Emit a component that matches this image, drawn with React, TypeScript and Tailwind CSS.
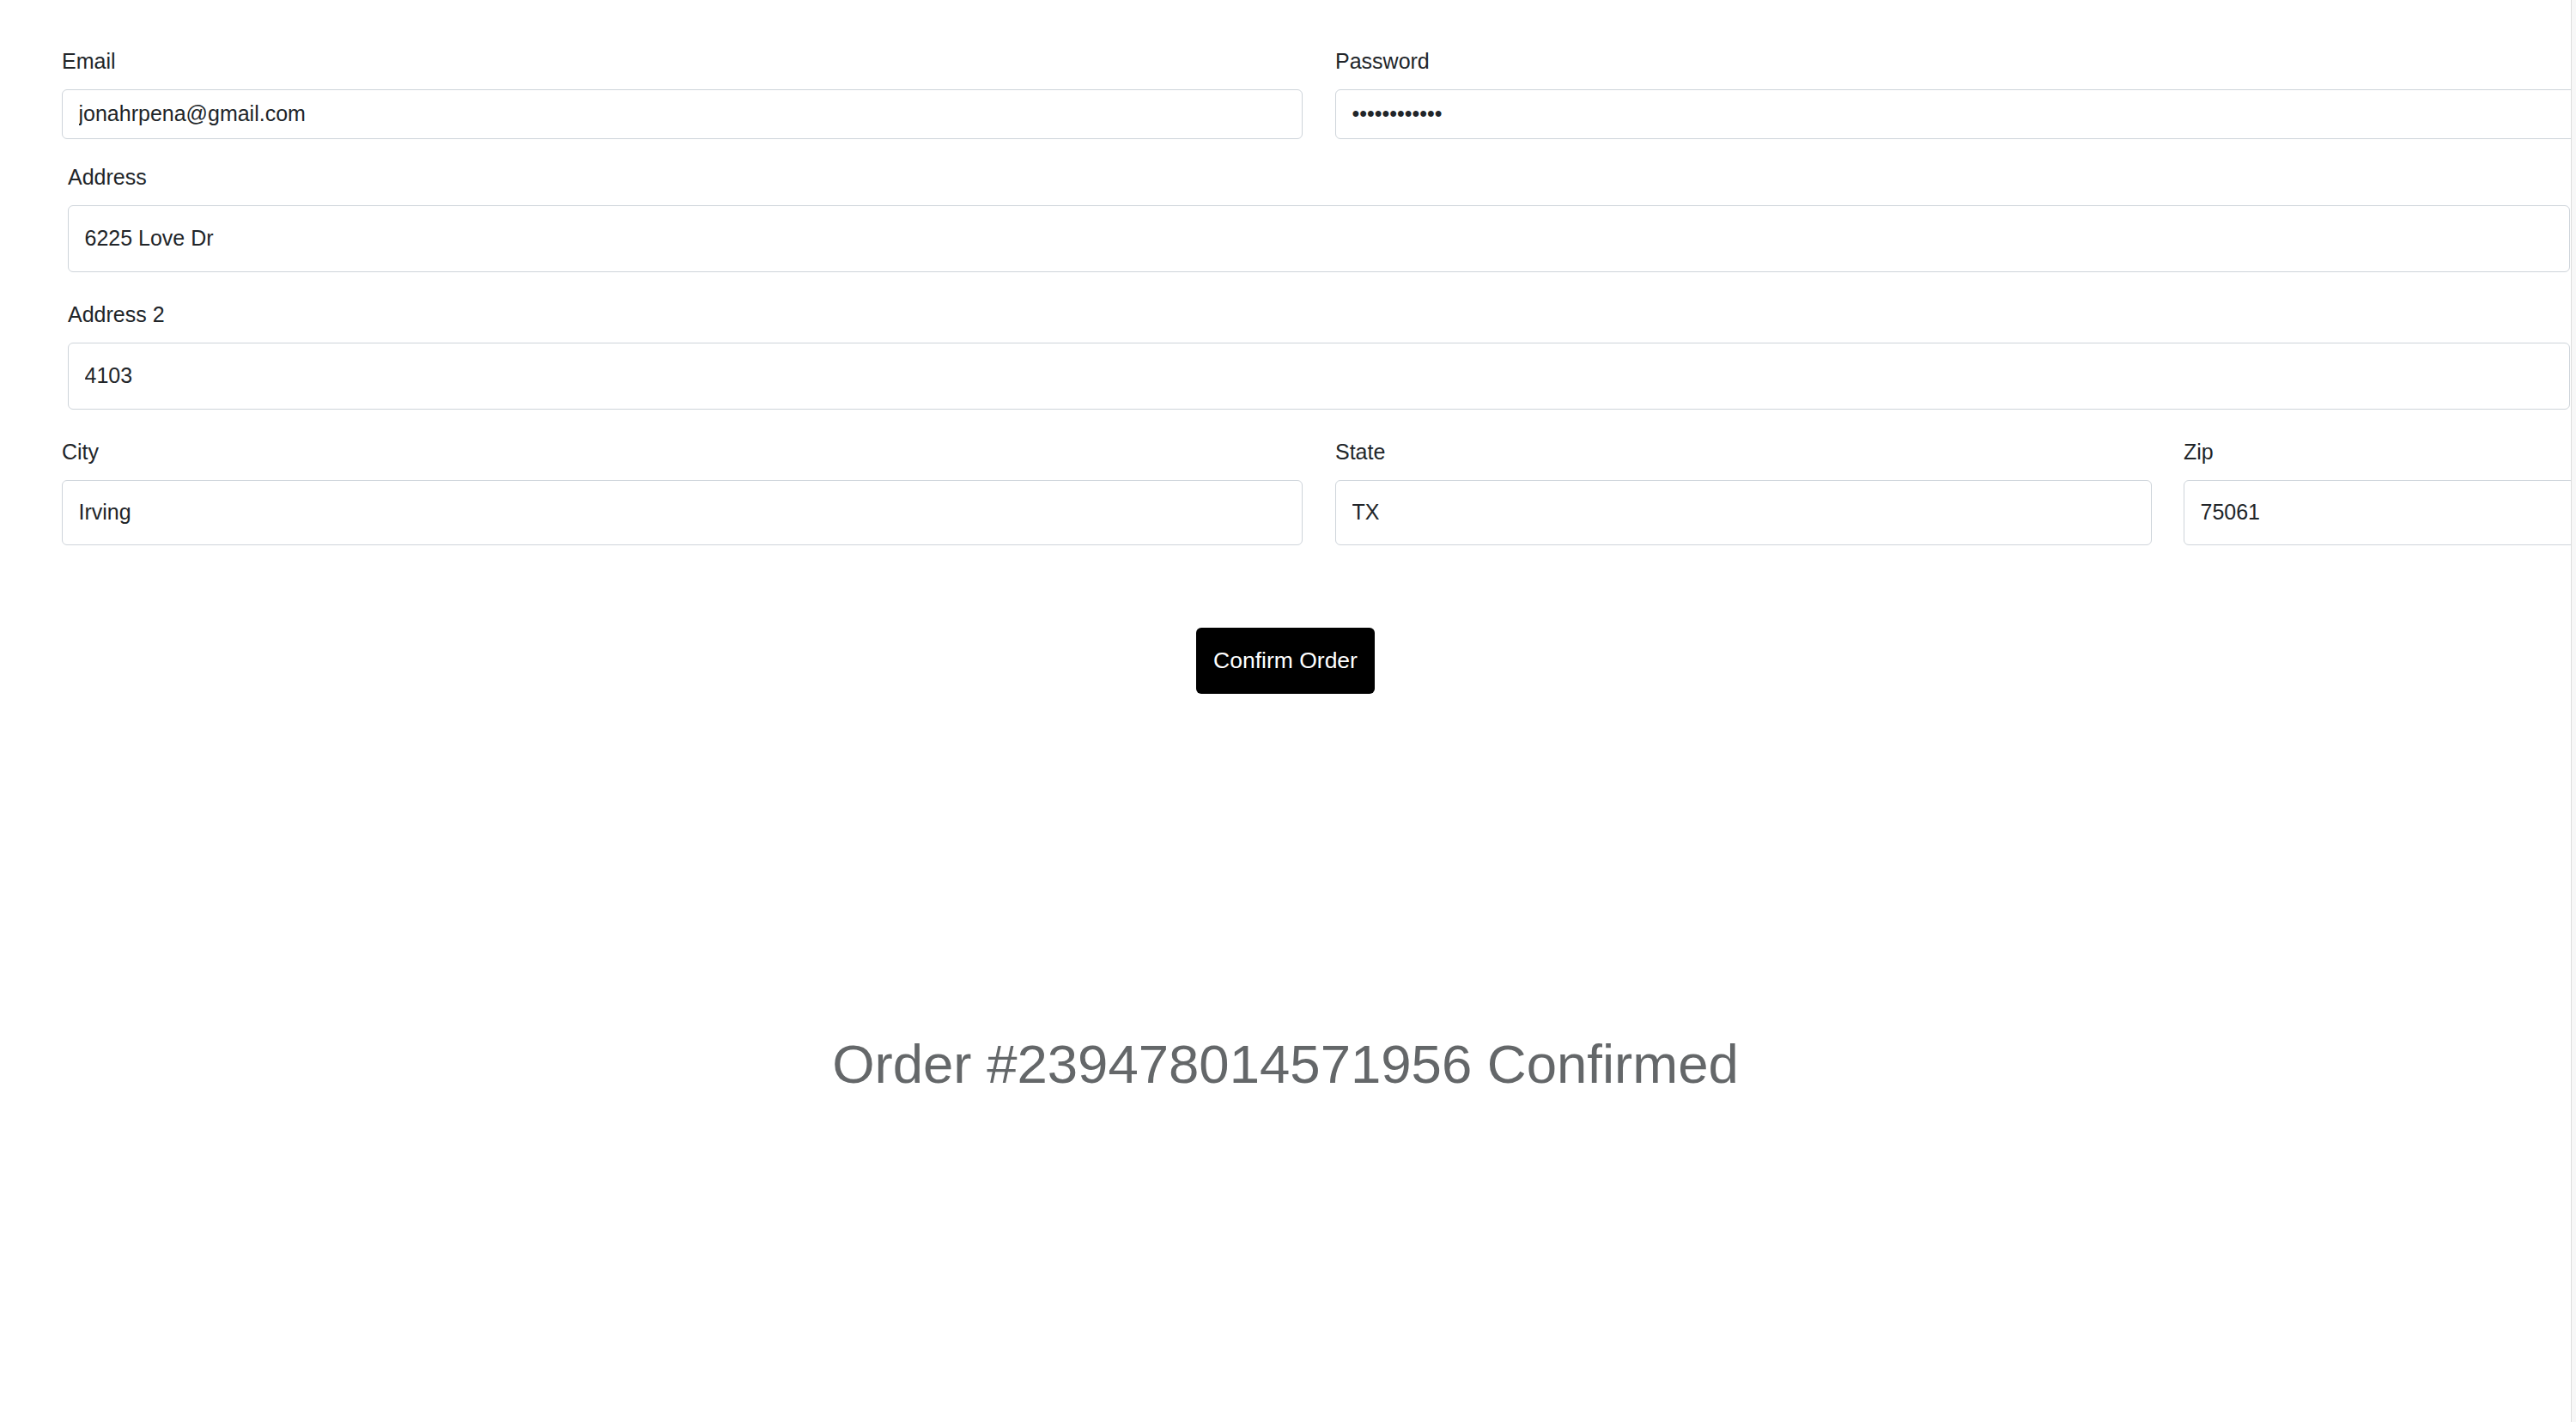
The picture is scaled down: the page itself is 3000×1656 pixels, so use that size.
import React from "react";

type FieldProps = {
  label: string;
  value: string;
  widthClass: string;
  heightClass: string;
  labelTop: string;
  indent?: string;
};

function Field({ label, value, widthClass, heightClass, labelTop, indent = "" }: FieldProps) {
  return (
    <div className={`${widthClass} ${labelTop} ${indent} shrink-0`}>
      <label className="mb-[13px] block h-[37.5px] leading-[37.5px]">{label}</label>
      <input
        readOnly
        type="text"
        value={value}
        className={`block w-full ${heightClass} rounded-[6px] border border-[#ced4da] bg-white px-[18.5px] text-[25px] leading-[37.5px] text-[#212529] outline-none`}
      />
    </div>
  );
}

export default function App() {
  return (
    <div className="flex h-[1656px] w-[3000px] overflow-hidden bg-white font-['Liberation_Sans',Arial,Helvetica,sans-serif] text-[25px] leading-[1.5] text-[#212529]">
      <div className="w-[2994px] shrink-0 overflow-hidden">
        <div className="w-[3100px] pl-[72px] pt-[53px]">
          <div className="flex gap-[38px]">
            <Field label="Email" value="jonahrpena@gmail.com" widthClass="w-[1445px]" heightClass="h-[58px]" labelTop="" />
            <Field label="Password" value="••••••••••••" widthClass="w-[1445px]" heightClass="h-[58px]" labelTop="" />
          </div>
          <Field
            label="Address"
            value="6225 Love Dr"
            widthClass="w-[2914px]"
            heightClass="h-[78px]"
            labelTop="mt-[26.5px]"
            indent="ml-[7px]"
          />
          <Field
            label="Address 2"
            value="4103"
            widthClass="w-[2914px]"
            heightClass="h-[78px]"
            labelTop="mt-[31.5px]"
            indent="ml-[7px]"
          />
          <div className="mt-[31.5px] flex">
            <Field label="City" value="Irving" widthClass="w-[1445px]" heightClass="h-[76px]" labelTop="" />
            <Field label="State" value="TX" widthClass="w-[951px]" heightClass="h-[76px]" labelTop="" indent="ml-[38px]" />
            <Field label="Zip" value="75061" widthClass="w-[456px]" heightClass="h-[76px]" labelTop="" indent="ml-[37px]" />
          </div>
        </div>

        <div className="mt-[96px] flex justify-center">
          <button
            type="button"
            className="h-[77px] rounded-[6px] bg-black px-[20px] pt-[2px] text-[26.5px] leading-[37.5px] text-white"
          >
            Confirm Order
          </button>
        </div>

        <h1 className="mt-[393.5px] text-center text-[63.5px] font-normal leading-[1.2] text-[#646769]">
          Order #239478014571956 Confirmed
        </h1>
      </div>
      <div className="h-full w-[6px] shrink-0 border-l border-[#dedede] bg-[#f7f7f7]" />
    </div>
  );
}
